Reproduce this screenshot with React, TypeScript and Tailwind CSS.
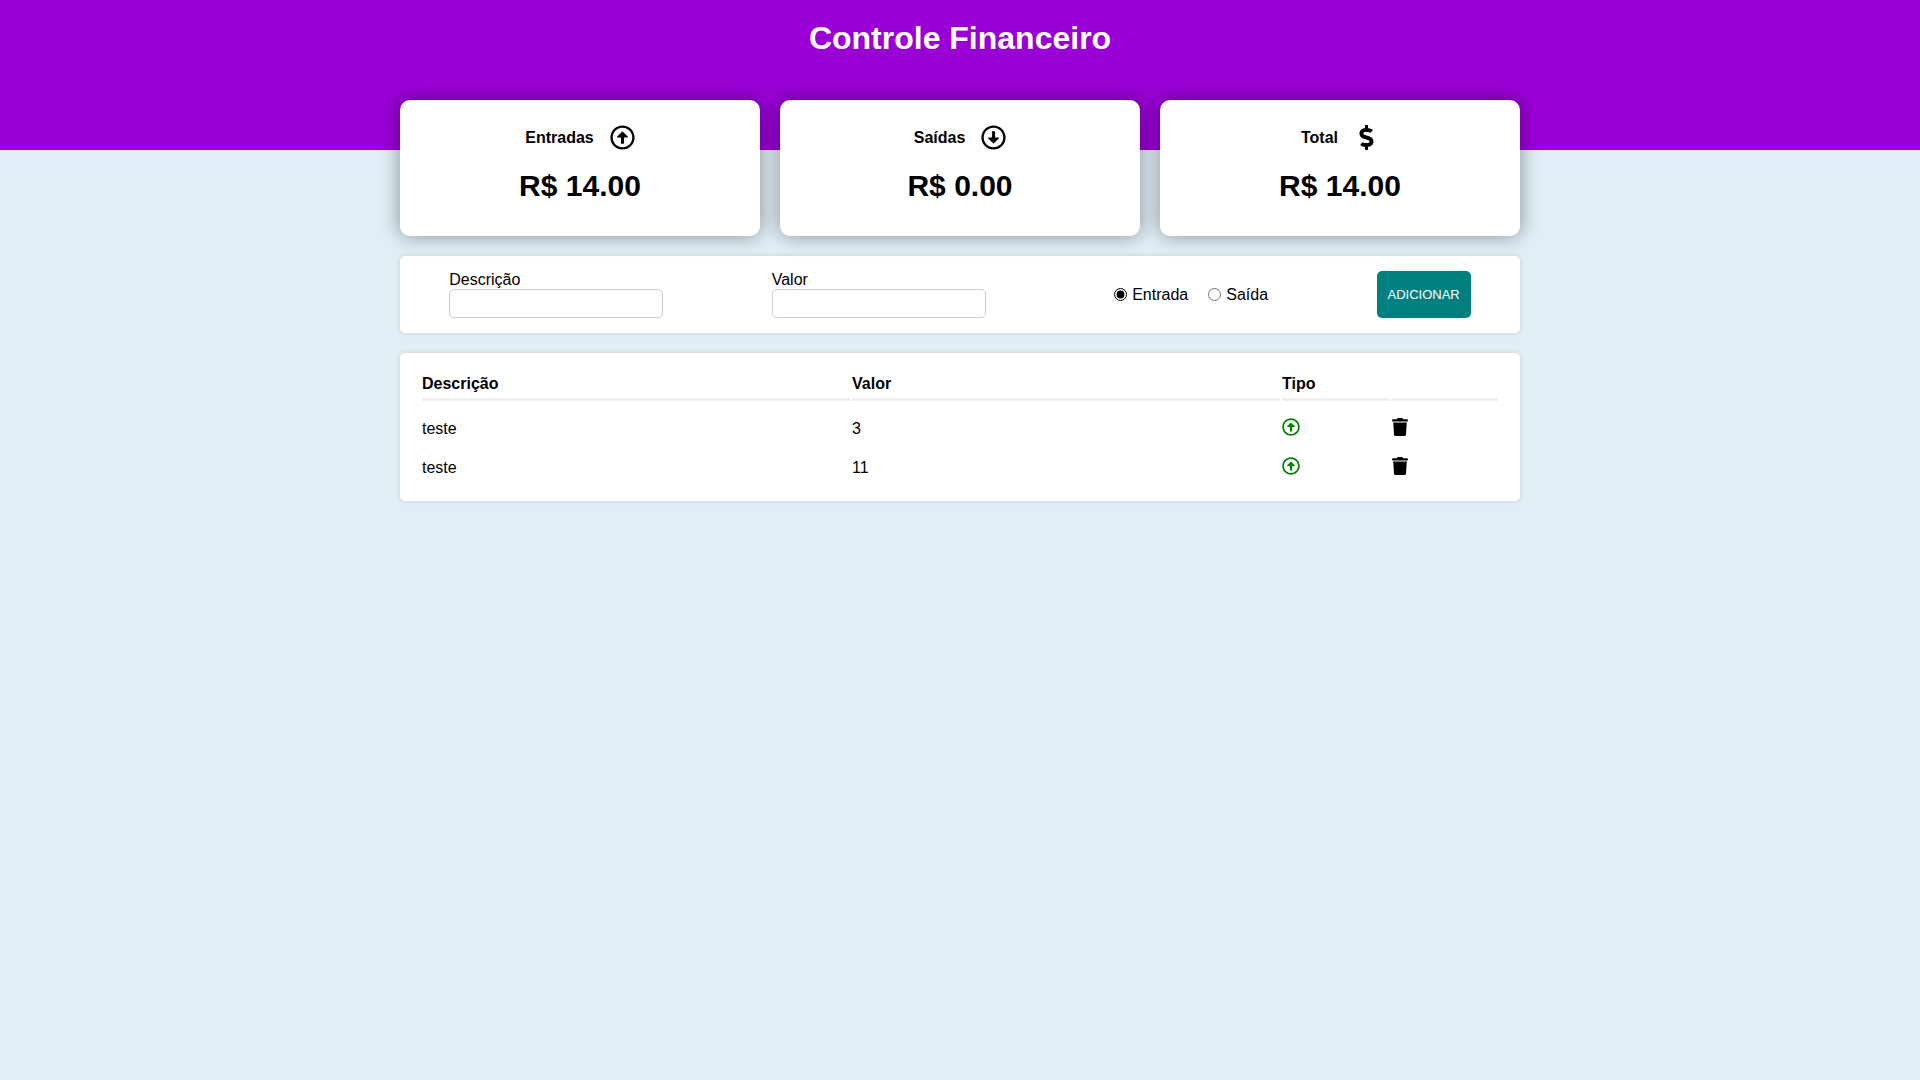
import { FaRegArrowAltCircleUp, FaRegArrowAltCircleDown, FaDollarSign, FaTrash } from "react-icons/fa";

const cards = [
  { title: "Entradas", Icon: FaRegArrowAltCircleUp, value: "R$ 14.00" },
  { title: "Saídas", Icon: FaRegArrowAltCircleDown, value: "R$ 0.00" },
  { title: "Total", Icon: FaDollarSign, value: "R$ 14.00" },
];

const items = [
  { id: 1, desc: "teste", amount: "3" },
  { id: 2, desc: "teste", amount: "11" },
];

const input =
  "block h-[29px] w-full rounded-[5px] border border-[#ccc] bg-white px-2.5 text-[15px] outline-none";

export default function App() {
  return (
    <div className="min-h-screen bg-[#e1eef6] font-['Liberation_Sans',Arial,sans-serif] text-base leading-[18px] text-black">
      {/* Colour swatch strip behind the summary cards */}
      <header className="h-[150px] bg-[#9a00d6] pt-5 text-center text-white">
        <h1 className="text-[32px] leading-9 font-bold">Controle Financeiro</h1>
      </header>
      <section className="mx-auto -mt-[50px] flex w-[98%] max-w-[1120px] justify-between gap-5">
        {cards.map(({ title, Icon, value }) => (
          <article
            key={title}
            className="flex h-[136px] flex-1 flex-col items-center rounded-[10px] bg-white pt-[25px] shadow-[0_0_20px_rgba(0,0,0,0.4)]"
          >
            <header className="flex items-center justify-center gap-4">
              <h2 className="font-bold">{title}</h2>
              <Icon size={25} />
            </header>
            <p className="mt-[18px] text-[30px] leading-[36px] font-bold">{value}</p>
          </article>
        ))}
      </section>
      <main className="mx-auto w-[98%] max-w-[1120px]">
        <form className="mt-5 flex justify-around gap-2.5 rounded-[5px] bg-white py-[15px] shadow-[0_0_5px_#ccc]">
          <div className="w-[214px]">
            <label htmlFor="desc" className="block">Descrição</label>
            <input id="desc" className={input} />
          </div>
          <div className="w-[214px]">
            <label htmlFor="valor" className="block">Valor</label>
            <input id="valor" type="number" className={input} />
          </div>
          <div className="flex items-center">
            <input id="in" type="radio" name="tipo" defaultChecked className="mr-[5px] ml-5 accent-black" />
            <label htmlFor="in">Entrada</label>
            <input id="out" type="radio" name="tipo" className="mr-[5px] ml-5 accent-black" />
            <label htmlFor="out">Saída</label>
          </div>
          <button type="button" className="rounded-[5px] bg-[teal] px-[11px] text-[13px] text-white">
            ADICIONAR
          </button>
        </form>
        <div className="mt-5 rounded-[5px] bg-white p-5 shadow-[0_0_5px_#ccc]">
          <table className="w-full table-fixed border-separate border-spacing-[2px]">
            <thead>
              <tr className="text-left">
                <th className="w-[40%] border-b-3 border-[#eee] pb-[5px]">Descrição</th>
                <th className="w-[40%] border-b-3 border-[#eee] pb-[5px]">Valor</th>
                <th className="w-[10%] border-b-3 border-[#eee] pb-[5px]">Tipo</th>
                <th className="w-[10%] border-b-3 border-[#eee] pb-[5px]" />
              </tr>
            </thead>
            <tbody>
              {items.map((i) => (
                <tr key={i.id} className="h-[37px]">
                  <td className="pt-[15px]">{i.desc}</td>
                  <td className="pt-[15px]">{i.amount}</td>
                  <td className="pt-[15px] align-top"><FaRegArrowAltCircleUp size={18} color="green" /></td>
                  <td className="pt-[15px] align-top"><button type="button" aria-label="Excluir" className="block"><FaTrash size={18} /></button></td>
                </tr>
              ))}
            </tbody>
          </table>
        </div>
      </main>
    </div>
  );
}
